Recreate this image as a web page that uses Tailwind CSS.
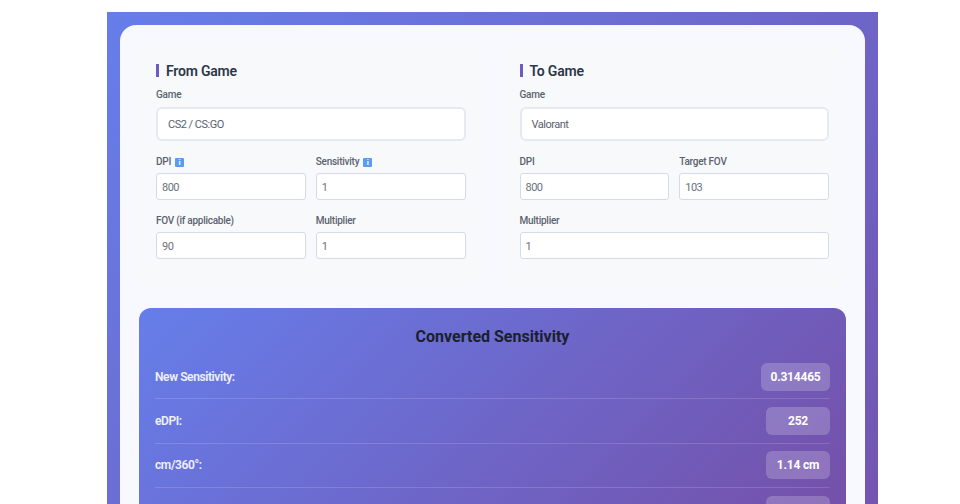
<!DOCTYPE html>
<html>
<head>
<meta charset="utf-8">
<script src="https://cdn.jsdelivr.net/npm/@tailwindcss/browser@4"></script>
<title>Sensitivity Converter</title>
</head>
<body class="bg-white overflow-hidden h-[504px] font-['Roboto',sans-serif]">
<div class="mt-3 ml-[107px] w-[771px] h-[800px] p-[13px] bg-linear-[135deg,#667eea,#764ba2]">
  <main class="rounded-2xl bg-[#f8f9ff] p-[19px] h-[700px]">
    <div class="grid grid-cols-2 gap-5">
      <section class="rounded-xl bg-[#f8f9fa] px-[17px] pt-[20px] pb-[24px] h-[244px]">
        <h2 class="flex items-center gap-[7px] text-[#2d3748] text-[14px] leading-[14px] font-semibold tracking-[-0.2px] h-[13px] mb-[11px]"><span class="w-[3px] h-[13px] bg-[#6f5bc0]"></span>From Game</h2>
        <label class="block text-[#5a6270] text-[10px] leading-[14px] font-medium tracking-[-0.25px] mb-[5px]">Game</label>
        <div class="h-[34px] rounded-md border-2 border-[#e6e9f0] bg-white pl-[10px] pt-[2px] flex items-center text-[#5a6270] text-[11px] tracking-[-0.5px]">CS2 / CS:GO</div>
        <div class="grid grid-cols-2 gap-[10px] mt-[14px]">
          <div>
            <label class="flex items-center gap-[4px] text-[#5a6270] text-[10px] leading-[14px] font-medium tracking-[-0.25px] h-[14px] mb-[4px]">DPI <span class="w-[9px] h-[9px] rounded-[1px] bg-[#5a9cf0] text-white text-[8px] leading-[9px] text-center font-bold">i</span></label>
            <div class="h-[27px] rounded-[3px] border border-[#d5dbe6] bg-white pl-[5px] pt-[4px] flex items-center text-[#6b7280] text-[11px] tracking-[-0.5px]">800</div>
          </div>
          <div>
            <label class="flex items-center gap-[4px] text-[#5a6270] text-[10px] leading-[14px] font-medium tracking-[-0.25px] h-[14px] mb-[4px]">Sensitivity <span class="w-[9px] h-[9px] rounded-[1px] bg-[#5a9cf0] text-white text-[8px] leading-[9px] text-center font-bold">i</span></label>
            <div class="h-[27px] rounded-[3px] border border-[#d5dbe6] bg-white pl-[5px] pt-[4px] flex items-center text-[#6b7280] text-[11px] tracking-[-0.5px]">1</div>
          </div>
          <div class="mt-[4px]">
            <label class="block text-[#5a6270] text-[10px] leading-[14px] font-medium tracking-[-0.25px] h-[14px] mb-[4px]">FOV (if applicable)</label>
            <div class="h-[27px] rounded-[3px] border border-[#d5dbe6] bg-white pl-[5px] pt-[4px] flex items-center text-[#6b7280] text-[11px] tracking-[-0.5px]">90</div>
          </div>
          <div class="mt-[4px]">
            <label class="block text-[#5a6270] text-[10px] leading-[14px] font-medium tracking-[-0.25px] h-[14px] mb-[4px]">Multiplier</label>
            <div class="h-[27px] rounded-[3px] border border-[#d5dbe6] bg-white pl-[5px] pt-[4px] flex items-center text-[#6b7280] text-[11px] tracking-[-0.5px]">1</div>
          </div>
        </div>
      </section>
      <section class="rounded-xl bg-[#f8f9fa] px-[17px] pt-[20px] pb-[24px] h-[244px]">
        <h2 class="flex items-center gap-[7px] text-[#2d3748] text-[14px] leading-[14px] font-semibold tracking-[-0.2px] h-[13px] mb-[11px]"><span class="w-[3px] h-[13px] bg-[#6f5bc0]"></span>To Game</h2>
        <label class="block text-[#5a6270] text-[10px] leading-[14px] font-medium tracking-[-0.25px] mb-[5px]">Game</label>
        <div class="h-[34px] rounded-md border-2 border-[#e6e9f0] bg-white pl-[10px] pt-[2px] flex items-center text-[#5a6270] text-[11px] tracking-[-0.5px]">Valorant</div>
        <div class="grid grid-cols-2 gap-[10px] mt-[14px]">
          <div>
            <label class="block text-[#5a6270] text-[10px] leading-[14px] font-medium tracking-[-0.25px] h-[14px] mb-[4px]">DPI</label>
            <div class="h-[27px] rounded-[3px] border border-[#d5dbe6] bg-white pl-[5px] pt-[4px] flex items-center text-[#6b7280] text-[11px] tracking-[-0.5px]">800</div>
          </div>
          <div>
            <label class="block text-[#5a6270] text-[10px] leading-[14px] font-medium tracking-[-0.25px] h-[14px] mb-[4px]">Target FOV</label>
            <div class="h-[27px] rounded-[3px] border border-[#d5dbe6] bg-white pl-[5px] pt-[4px] flex items-center text-[#6b7280] text-[11px] tracking-[-0.5px]">103</div>
          </div>
          <div class="col-span-2 mt-[4px]">
            <label class="block text-[#5a6270] text-[10px] leading-[14px] font-medium tracking-[-0.25px] h-[14px] mb-[4px]">Multiplier</label>
            <div class="h-[27px] rounded-[3px] border border-[#d5dbe6] bg-white pl-[5px] pt-[4px] flex items-center text-[#6b7280] text-[11px] tracking-[-0.5px]">1</div>
          </div>
        </div>
      </section>
    </div>
    <section class="mt-5 rounded-xl h-[300px] px-4 pt-[17px] bg-linear-[135deg,#667eea,#764ba2]">
      <h2 class="text-center text-[#1a202c] text-[16px] leading-6 font-bold mb-[6px]">Converted Sensitivity</h2>
      <div class="flex justify-between items-center h-[44.33px] border-b border-white/15">
        <span class="text-white/90 text-[12px] font-semibold tracking-[-0.4px]">New Sensitivity:</span>
        <span class="h-7 w-[69px] flex justify-center items-center rounded-md bg-white/20 text-white text-[12px] font-bold tracking-[-0.2px]">0.314465</span>
      </div>
      <div class="flex justify-between items-center h-[44.33px] border-b border-white/15">
        <span class="text-white/90 text-[12px] font-semibold tracking-[-0.4px]">eDPI:</span>
        <span class="h-7 w-[64px] flex justify-center items-center rounded-md bg-white/20 text-white text-[12px] font-bold tracking-[-0.2px]">252</span>
      </div>
      <div class="flex justify-between items-center h-[44.33px] border-b border-white/15">
        <span class="text-white/90 text-[12px] font-semibold tracking-[-0.4px]">cm/360°:</span>
        <span class="h-7 w-[64px] flex justify-center items-center rounded-md bg-white/20 text-white text-[12px] font-bold tracking-[-0.2px]">1.14 cm</span>
      </div>
      <div class="flex justify-end items-start pt-[8px]">
        <span class="h-7 w-[64px] rounded-md bg-white/20"></span>
      </div>
    </section>
  </main>
</div>
</body>
</html>
